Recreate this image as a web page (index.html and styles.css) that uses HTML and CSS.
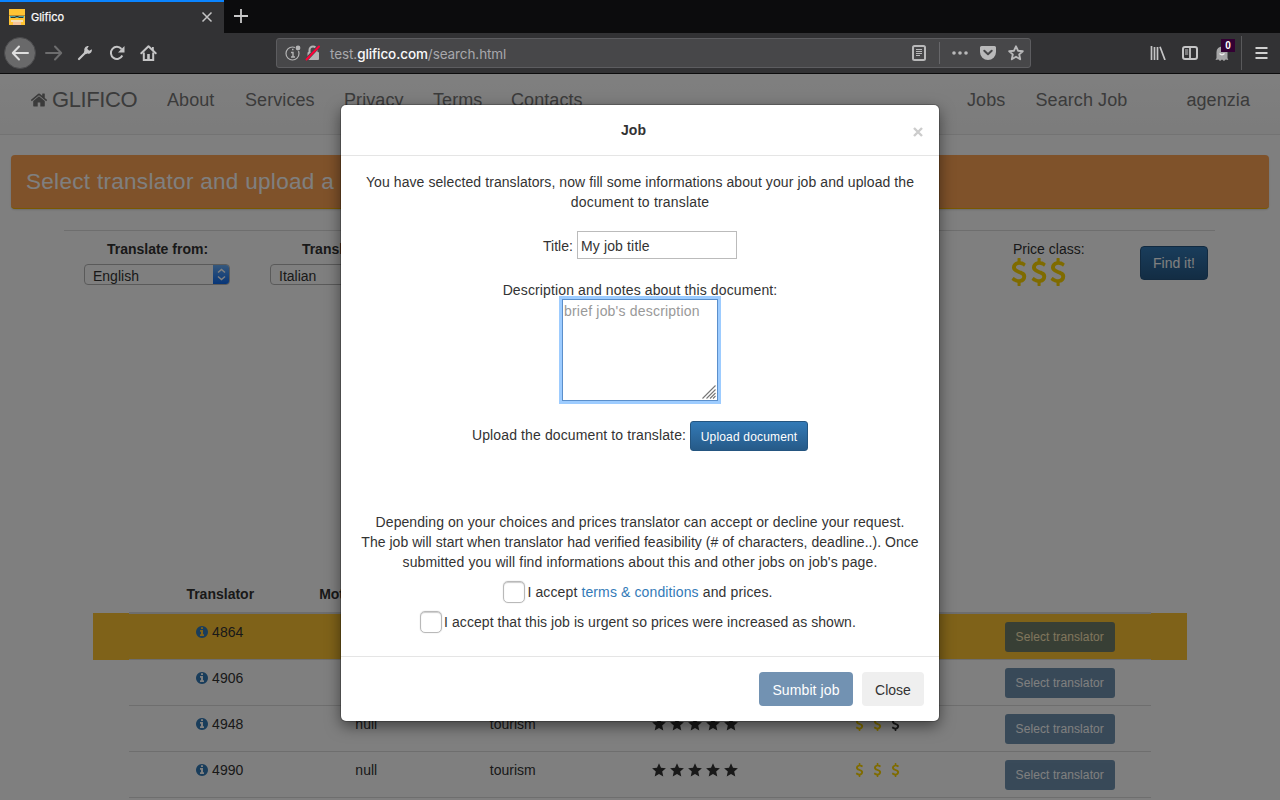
FILE: index.html
```html
<!DOCTYPE html>
<html lang="en">
<head>
<meta charset="utf-8">
<title>Glifico</title>
<link rel="stylesheet" href="styles.css">
</head>
<body>
<svg width="0" height="0" class="defs">
  <symbol id="usd" viewBox="400 0 1000 1792"><path fill="currentColor" d="M1362 1185q0 153-99.5 263.5t-258.5 136.5v175q0 14-9 23t-23 9h-135q-13 0-22.5-9.5t-9.5-22.5v-175q-66-9-127.5-31t-101.5-44.5-74-48-46.5-37.5-17.5-18q-17-21-2-41l103-135q7-10 23-12 15-2 24 9l2 2q113 99 243 125 37 8 74 8 81 0 142.5-43t61.5-122q0-28-15-53t-33.5-42-58.5-37.5-66-32-80-32.5q-39-16-61.5-25t-61.5-26.5-62.5-31-56.5-35.5-53.5-42.5-43.5-49-35.5-58-21-66.5-8.5-78q0-138 98-242t255-134v-180q0-13 9.5-22.5t22.5-9.5h135q14 0 23 9t9 23v176q57 6 110.5 23t87 33.5 63.5 37.5 39 29 15 14q17 18 5 38l-81 146q-8 15-23 16-14 3-27-7-3-3-14.5-12t-39-26.5-58.5-32-74.5-26-85.5-11.5q-95 0-155 43t-60 111q0 26 8.5 48t29.5 41.5 39.5 33 56 31 60.5 27 70 27.5q53 20 81 31.5t76 35 75.5 42.5 62 50 53 63.5 31.5 76.5 13 94z"/></symbol>
  <symbol id="star" viewBox="0 0 14 14"><path fill="currentColor" d="M7 .3l2 4.5 4.9.5-3.7 3.3 1.1 4.9L7 11l-4.300 2.500 1.100-4.900L.1 5.300l4.900-.5z"/></symbol>
  <symbol id="info" viewBox="128 128 1536 1536"><path fill="currentColor" d="M1152 1376v-160q0-14-9-23t-23-9h-96v-512q0-14-9-23t-23-9h-320q-14 0-23 9t-9 23v160q0 14 9 23t23 9h96v320h-96q-14 0-23 9t-9 23v160q0 14 9 23t23 9h448q14 0 23-9t9-23zm-128-896v-160q0-14-9-23t-23-9h-192q-14 0-23 9t-9 23v160q0 14 9 23t23 9h192q14 0 23-9t9-23zm640 416q0 209-103 385.5t-279.5 279.500-385.500 103-385.500-103-279.500-279.500-103-385.500 103-385.500 279.500-279.500 385.500-103 385.500 103 279.500 279.500 103 385.500z"/></symbol>
</svg>

<div class="tabstrip">
  <div class="tab">
    <svg class="favicon" width="16" height="16" viewBox="0 0 16 16"><path fill="#ffc433" d="M0 0h16v16H0z"/><path fill="#49a5a0" d="M1 6.500h14v2.500H1z"/><path fill="#b98a35" d="M0 6h16v1H0z"/><path fill="#35302c" d="M2 8h4.500v1H2zM9.500 8H14v1H9.500zM6.500 7h3v1h-3z"/><path fill="#f3dfba" d="M2 11h12v2H2z"/><path fill="#f6c49b" d="M4 13h8v3H4z"/></svg>
    <span class="tab-title">Glifico</span>
    <svg width="12" height="12" viewBox="0 0 12 12"><path d="M1.500 1.500l9 9m0-9l-9 9" stroke="#c4c4c5" stroke-width="1.500" fill="none"/></svg>
  </div>
  <svg class="new-tab" width="14" height="14" viewBox="0 0 14 14"><path d="M7 0v14M0 7h14" stroke="#c8c8c8" stroke-width="1.800"/></svg>
</div>

<div class="toolbar">
  <div class="back"><svg width="18" height="16" viewBox="0 0 18 16"><path d="M17 8H2m6-6.500L1.800 8 8 14.500" fill="none" stroke="#dedede" stroke-width="2" stroke-linecap="round" stroke-linejoin="round"/></svg></div>
  <svg class="tool" width="18" height="16" viewBox="0 0 18 16"><path d="M1 8h15M10 1.500L16.200 8 10 14.500" fill="none" stroke="#6d6d6e" stroke-width="2" stroke-linecap="round" stroke-linejoin="round"/></svg>
  <svg class="tool" width="16" height="16" viewBox="0 0 16 16"><path d="M2 14l6.500-6.500" stroke="#c5c5c6" stroke-width="2.200" stroke-linecap="round"/><path d="M14.800 4.200l-2.600 1.600-2-2L11.800 1C9 .6 6.700 3 7.400 5.800L6.800 7.400l1.800 1.800 1.600-.6c2.800.7 5.200-1.600 4.600-4.400z" fill="#c5c5c6"/></svg>
  <svg class="tool" width="16" height="16" viewBox="0 0 16 16"><path d="M13.300 10.500A6 6 0 1 1 12.500 4" fill="none" stroke="#c5c5c6" stroke-width="2"/><path d="M15.500 1v6.500H9z" fill="#c5c5c6"/></svg>
  <svg class="tool" width="17" height="16" viewBox="0 0 17 16"><path d="M1.300 8.200l7.200-7 7.200 7" fill="none" stroke="#c5c5c6" stroke-width="2" stroke-linecap="round" stroke-linejoin="round"/><path d="M3.800 7.500V15h9.400V7.500" fill="none" stroke="#c5c5c6" stroke-width="2"/><path d="M12 2h1.800v3H12zM7.200 9h2.600v6H7.200z" fill="#c5c5c6"/></svg>
  <div class="urlbar">
    <svg width="16" height="16" viewBox="0 0 16 16"><circle cx="7.500" cy="8.500" r="6.500" fill="none" stroke="#b4b4b5" stroke-width="1.200"/><path d="M6 7.500h2V12M6 12h4M7 4.500h1.500" stroke="#b4b4b5" stroke-width="1.400" fill="none"/><circle cx="13" cy="3" r="3.200" fill="#474749"/><circle cx="13" cy="3" r="2.400" fill="#b4b4b5"/></svg>
    <svg class="lock" width="16" height="16" viewBox="0 0 16 16"><path d="M4.500 8V5a3.500 3.500 0 0 1 7 0v3" fill="none" stroke="#b4b4b5" stroke-width="2"/><rect x="2.500" y="7" width="11.500" height="8" rx="1" fill="#b4b4b5"/><path d="M1 15L14 1" stroke="#474749" stroke-width="3.400"/><path d="M1.500 14.500L14 1.500" stroke="#ff0039" stroke-width="2" stroke-linecap="round"/></svg>
    <span class="url">test.<b>glifico.com</b>/search.html</span>
    <svg class="reader" width="14" height="16" viewBox="0 0 14 16"><rect x="1" y="1" width="12" height="14" rx="1.500" fill="none" stroke="#b9b9ba" stroke-width="2"/><path d="M4 4.500h6M4 6.500h6M4 8.500h6M4 10.500h4" stroke="#b9b9ba"/></svg>
    <span class="url-sep"></span>
    <svg class="dots" width="16" height="4" viewBox="0 0 16 4"><g fill="#b9b9ba"><circle cx="2" cy="2" r="1.800"/><circle cx="8" cy="2" r="1.800"/><circle cx="14" cy="2" r="1.800"/></g></svg>
    <svg class="pocket" width="16" height="14" viewBox="0 0 16 14"><path d="M1.500 0h13A1.500 1.500 0 0 1 16 1.500V6A8 8 0 0 1 0 6V1.500A1.500 1.500 0 0 1 1.500 0z" fill="#b9b9ba"/><path d="M4.300 4.800L8 8.300l3.700-3.500" fill="none" stroke="#474749" stroke-width="2" stroke-linecap="round" stroke-linejoin="round"/></svg>
    <svg width="16" height="16" viewBox="0 0 16 16"><path d="M8 1.300l2 4.400 4.800.5-3.600 3.200 1 4.800L8 11.700l-4.200 2.500 1-4.800L1.200 6.200 6 5.700z" fill="none" stroke="#b9b9ba" stroke-width="1.900" stroke-linejoin="round"/></svg>
  </div>
  <div class="extras">
    <svg width="16" height="14" viewBox="0 0 16 14"><path d="M1.500 0v14M4.500 1v13M7.500 1v13M10 .8L15 14" stroke="#c5c5c6" stroke-width="1.700"/></svg>
    <svg width="16" height="14" viewBox="0 0 16 14"><rect x="1" y="1" width="14" height="12" rx="2" fill="none" stroke="#c5c5c6" stroke-width="2"/><path d="M8 1v12" stroke="#c5c5c6" stroke-width="1.800"/><path d="M3 4h3.200M3 6h3.200M3 8h3.200" stroke="#c5c5c6"/></svg>
    <div class="ghost">
      <svg width="16" height="16" viewBox="0 0 16 16"><path d="M2.500 13V7a5.500 5.500 0 0 1 11 0v6l.8 2-2.600-.5L10 16l-2-1.500L6 16l-1.500-1.500-3 .5z" fill="#a6a6a7"/><path d="M5.500 8.500q2.500 2.500 5 0" stroke="#eee" stroke-width="1.300" fill="none"/></svg>
      <span class="badge">0</span>
    </div>
    <svg class="menu" width="13" height="12" viewBox="0 0 13 12"><path d="M.5 1h12M.5 6h12M.5 11h12" stroke="#d0d0d0" stroke-width="2"/></svg>
  </div>
</div>

<div class="page">
  <nav class="navbar">
    <a class="brand"><svg width="18" height="18" viewBox="0 0 1792 1792"><path fill="#777" d="M1472 992v480q0 26-19 45t-45 19h-384v-384h-256v384h-384q-26 0-45-19t-19-45v-480q0-1 .5-3t.5-3l575-474 575 474q1 2 1 6zm223-69l-62 74q-8 9-21 11h-3q-13 0-21-7l-692-577-692 577q-12 8-24 7-13-2-21-11l-62-74q-8-10-7-23.500t11-21.500l719-599q32-26 76-26t76 26l244 204v-195q0-14 9-23t23-9h192q14 0 23 9t9 23v408l219 182q10 8 11 21.500t-7 23.500z"/></svg><span>GLIFICO</span></a>
    <a class="n-about">About</a><a class="n-services">Services</a><a class="n-privacy">Privacy</a><a class="n-terms">Terms</a><a class="n-contacts">Contacts</a>
    <div class="nav-right"><a class="n-jobs">Jobs</a><a class="n-search">Search Job</a><a class="n-user">agenzia</a></div>
  </nav>
  <div class="banner"><span>Select translator and upload a</span></div>
  <div class="filters">
    <div class="field"><label>Translate from:</label><div class="select">English<i><svg width="9" height="13" viewBox="0 0 9 13"><path d="M1 4.500l3.500-3 3.500 3M1 8.500l3.500 3 3.500-3" fill="none" stroke="#fff" stroke-width="1.500"/></svg></i></div></div>
    <div class="field second"><label>Translate to:</label><div class="select">Italian<i></i></div></div>
    <div class="price"><span>Price class:</span><div><svg><use href="#usd"/></svg><svg><use href="#usd"/></svg><svg><use href="#usd"/></svg></div></div>
    <div class="btn btn-primary find">Find it!</div>
  </div>

  <div class="table">
    <div class="row head"><span>Translator</span><span class="mother">Mother tongue</span></div>
    <div class="row selected"><span><svg class="info"><use href="#info"/></svg> 4864</span><span class="last"><b class="pick">Select translator</b></span></div>
    <div class="row"><span><svg class="info"><use href="#info"/></svg> 4906</span><span class="last"><b class="pick">Select translator</b></span></div>
    <div class="row"><span><svg class="info"><use href="#info"/></svg> 4948</span><span>null</span><span class="topic">tourism</span><span class="stars"><svg><use href="#star"/></svg><svg><use href="#star"/></svg><svg><use href="#star"/></svg><svg><use href="#star"/></svg><svg><use href="#star"/></svg></span><span class="usd"><svg><use href="#usd"/></svg><svg><use href="#usd"/></svg><svg class="off"><use href="#usd"/></svg></span><span><b class="pick">Select translator</b></span></div>
    <div class="row"><span><svg class="info"><use href="#info"/></svg> 4990</span><span>null</span><span class="topic">tourism</span><span class="stars"><svg><use href="#star"/></svg><svg><use href="#star"/></svg><svg><use href="#star"/></svg><svg><use href="#star"/></svg><svg><use href="#star"/></svg></span><span class="usd"><svg><use href="#usd"/></svg><svg><use href="#usd"/></svg><svg><use href="#usd"/></svg></span><span><b class="pick">Select translator</b></span></div>
    <div class="row"></div>
  </div>

  <div class="backdrop">
    <div class="modal">
      <div class="modal-header"><b>Job</b><svg width="10" height="10" viewBox="0 0 10 10"><path d="M1 1l8 8m0-8L1 9" stroke="#ccc" stroke-width="2.400"/></svg></div>
      <div class="modal-body">
        <p class="intro"><span class="l1">You have selected translators, now fill some informations about your job and upload the</span><br><span class="l2">document to translate</span></p>
        <div class="title-row"><span>Title:</span><input type="text" value="My job title"></div>
        <p class="desc"><span>Description and notes about this document:</span></p>
        <div class="area"><textarea placeholder="brief job's description"></textarea><svg width="14" height="14" viewBox="0 0 14 14"><path d="M.5 13.500l13-13M4.500 13.500l9-9M8 13.500l5.500-5.500M11 13.500l2.500-2.500" stroke="#777" stroke-width="1.100"/></svg></div>
        <div class="upload"><span>Upload the document to translate:</span><div class="btn btn-primary small">Upload document</div></div>
        <p class="notes"><span class="n1">Depending on your choices and prices translator can accept or decline your request.</span><br><span class="n2">The job will start when translator had verified feasibility (# of characters, deadline..). Once</span><br><span class="n3">submitted you will find informations about this and other jobs on job's page.</span></p>
        <div class="check first"><i></i><span class="c1">I accept <a>terms &amp; conditions</a> and prices.</span></div>
        <div class="check"><i></i><span class="c2">I accept that this job is urgent so prices were increased as shown.</span></div>
      </div>
      <div class="modal-footer"><div class="submit">Sumbit job</div><div class="close">Close</div></div>
    </div>
  </div>
</div>
</body>
</html>
```
FILE: styles.css
```css
* { box-sizing: border-box; }
body { margin: 0; width: 1280px; height: 800px; overflow: hidden; display: flex; flex-direction: column; font: 14px/20px "Liberation Sans", Arial, sans-serif; color: #333; background: #808080; }
p { margin: 0; }
svg { display: block; flex: none; }
.defs { position: absolute; }

/* browser chrome */
.tabstrip { height: 33px; flex: none; background: #0c0c0d; display: flex; }
.tab { width: 224px; background: #323234; border-top: 2px solid #0a84ff; display: flex; align-items: center; padding: 0 11px 2px 9px; }
.tab-title { flex: 1; margin-left: 6px; font: 11px/20px Inter, sans-serif; color: #f9f9fa; -webkit-text-stroke: .25px #f9f9fa; }
.new-tab { margin: 9px 0 0 10px; }
.toolbar { height: 41px; flex: none; background: #323234; border-bottom: 1px solid #0c0c0d; display: flex; align-items: center; padding-left: 4px; }
.back { width: 32px; height: 32px; border-radius: 50%; background: #69696a; border: 1px solid #49494b; display: flex; align-items: center; justify-content: center; }
.tool { margin-left: 16px; }
.tool:nth-child(2) { margin-left: 9px; }
.tool:nth-child(3) { margin-left: 14px; }
.tool:nth-child(5) { margin-left: 15px; }
.urlbar { width: 755px; height: 30px; border: 1px solid #5d5d60; border-radius: 3px; background: #474749; display: flex; align-items: center; padding: 0 6px 0 8px; }
.tool + .urlbar { margin-left: 119px; }
.lock { margin-left: 4px; }
.url { flex: 1; margin-left: 9px; padding-top: 2px; color: #a8a8ac; font: 13.500px/20px Inter, sans-serif; letter-spacing: -.09px; }
.url b { color: #f9f9fa; font-weight: 500; }
.url-sep { width: 1px; height: 22px; background: #67676a; margin: 0 12px 0 13px; }
.pocket { margin: 0 12px; }
.extras { display: flex; align-items: center; margin-left: 119px; gap: 16px; height: 100%; }
.ghost { position: relative; width: 28px; height: 34px; border-right: 1px solid #59595b; padding: 9px 0 0; }
.badge { position: absolute; left: 7px; top: 3px; width: 14px; height: 13px; background: #330033; color: #fff; font: bold 10px/13px "Liberation Sans", sans-serif; text-align: center; }
.menu { margin-left: -3px; }

/* site */
.page { position: relative; flex: 1; background: #fff; overflow: hidden; z-index: 0; }
.navbar { height: 61px; border-bottom: 1px solid #e7e7e7; background: linear-gradient(#fff, #f8f8f8); display: flex; align-items: center; padding: 0 30px 8px; color: #777; font-size: 18px; letter-spacing: .08px; }
.brand { display: flex; align-items: center; width: 137px; font-size: 22px; }
.brand span { margin-left: 4px; letter-spacing: -.4px; }
.n-about { width: 78px; }
.n-services { width: 99px; }
.n-privacy { width: 89px; }
.n-terms { width: 78px; }
.nav-right { margin-left: auto; display: flex; width: 283px; }
.n-jobs { width: 69px; }
.n-search { width: 152px; }
.banner { margin: 20px 11px 0; height: 54px; border-radius: 4px; border-bottom: 1px solid #f5b000; background: #ffa454; color: #fff; font-size: 22.500px; letter-spacing: .3px; line-height: 54px; padding-left: 15px; box-shadow: 0 1px 2px rgba(0,0,0,.15); white-space: nowrap; }
.filters { margin: 21px 65px 0 64px; border-top: 1px solid #ddd; height: 346px; display: flex; align-items: flex-start; padding: 8px 7px 0 20px; }
.field { width: 146px; text-align: center; }
.field label { font-weight: bold; display: block; padding-left: 1px; }
.second { margin-left: 40px; }
.select { margin-top: 5px; height: 21px; border: 1px solid #b5b5b5; border-radius: 4px; text-align: left; line-height: 23px; padding-left: 8px; display: flex; justify-content: space-between; background: #fff; overflow: hidden; }
.select i { width: 17px; margin: -1px; background: linear-gradient(#6fb3fa, #0968f0); display: flex; align-items: center; justify-content: center; }
.price { margin-left: 595px; width: 76px; white-space: nowrap; }
.price span { margin-left: 2px; }
.price div { display: flex; color: #ffd700; gap: 3.500px; margin-top: -1px; }
.price svg { width: 16px; height: 28px; }
.btn { border: 1px solid #245580; border-radius: 4px; color: #fff; background: linear-gradient(#337ab7, #265a88); text-align: center; white-space: nowrap; }
.find { margin: 7px 0 0 53px; width: 68px; height: 34px; line-height: 33px; }
.table { margin: 0 129px; }
.row { position: relative; display: grid; grid-template-columns: 5fr 3fr 5fr 5fr 5fr 5fr; height: 46px; border-top: 1px solid #ddd; padding-top: 8px; text-align: center; align-items: start; }
.row > span { white-space: nowrap; }
.row .last { grid-column: 6; }
.row .topic { padding-left: 1px; }
.head { height: 37px; font-weight: bold; border-top: 0; border-bottom: 1px solid #ddd; }
.mother { padding-left: 3px; }
.selected::before { content: ""; position: absolute; z-index: -1; left: -36px; right: -36px; top: -1px; bottom: -1px; background: #ffc433; }
.info { display: inline-block; width: 12px; height: 12px; margin-left: -1px; vertical-align: -1px; color: #337ab7; }
.stars, .usd { display: flex; justify-content: center; gap: 4px; padding: 3px 0 0 1px; }
.stars svg { width: 14px; height: 14px; }
.usd { color: #ffd700; gap: 9px; }
.usd svg { width: 9px; height: 14px; }
.usd .off { color: #333; }
.pick { display: inline-block; width: 110px; height: 30px; border-radius: 3px; background: #265a88; opacity: .65; color: #fff; font-weight: normal; font-size: 12px; line-height: 30px; letter-spacing: .1px; }

/* dialog */
.backdrop { position: absolute; inset: 0; background: rgba(0,0,0,.5); display: flex; justify-content: center; align-items: flex-start; padding-top: 31px; }
.modal { width: 598px; height: 616px; background: #fff; border-radius: 5px; box-shadow: 0 0 0 1px rgba(0,0,0,.2), 0 5px 15px rgba(0,0,0,.5); }
.modal-header { height: 51px; border-bottom: 1px solid #e5e5e5; display: flex; align-items: center; padding: 0 16px 0 13px; }
.modal-header b { flex: 1; text-align: center; font-weight: bold; }
.modal-header svg { margin-top: 3px; }
.modal-body { height: 500px; padding-top: 16px; text-align: center; white-space: nowrap; }
.l1 { letter-spacing: .08px; }
.l2 { letter-spacing: .18px; }
.title-row { display: flex; justify-content: center; align-items: center; gap: 4px; margin-top: 19px; }
input { width: 160px; height: 28px; border: 1px solid #bbb; padding: 2px 3px 0; font: inherit; letter-spacing: .15px; color: #333; border-radius: 0; }
.title-row span { padding-top: 2px; }
.desc { margin-top: 21px; letter-spacing: .13px; }
.area { position: relative; width: 156px; height: 102px; margin: -1px auto 0; }
textarea { display: block; width: 156px; height: 102px; border: 1px solid #5b8fcb; padding: 1px; font: inherit; letter-spacing: .2px; resize: none; outline: 0; border-radius: 0; box-shadow: 0 0 0 3px #9dccff; }
textarea::placeholder { color: #999; }
.area svg { position: absolute; right: 2px; bottom: 2px; }
.upload { display: flex; justify-content: center; gap: 4px; margin-top: 20px; line-height: 28px; letter-spacing: .12px; }
.small { width: 118px; height: 30px; font-size: 12px; letter-spacing: .17px; line-height: 30px; border-radius: 3px; }
.notes { margin-top: 61px; }
.n1 { letter-spacing: .08px; }
.n2 { letter-spacing: .035px; }
.n3 { letter-spacing: .13px; }
.check { display: flex; justify-content: center; align-items: center; gap: 2px; height: 30px; padding-right: 4px; }
.check.first { margin-top: 5px; }
.c1 { letter-spacing: .12px; }
.c2 { letter-spacing: .06px; }
.check i { width: 22px; height: 22px; border: 1px solid #b9b9b9; border-radius: 5px; box-shadow: inset 0 1px 1px #ccc, 0 0 1px #bbb; }
a { color: inherit; }
.check a { color: #337ab7; }
.modal-footer { border-top: 1px solid #e5e5e5; display: flex; justify-content: flex-end; gap: 9px; padding: 15px 15px 0; text-align: center; line-height: 36px; }
.submit { width: 94px; height: 34px; border-radius: 4px; background: #7292b2; color: #fff; letter-spacing: .1px; }
.close { width: 62px; height: 34px; border-radius: 4px; background: #efefef; }
```
